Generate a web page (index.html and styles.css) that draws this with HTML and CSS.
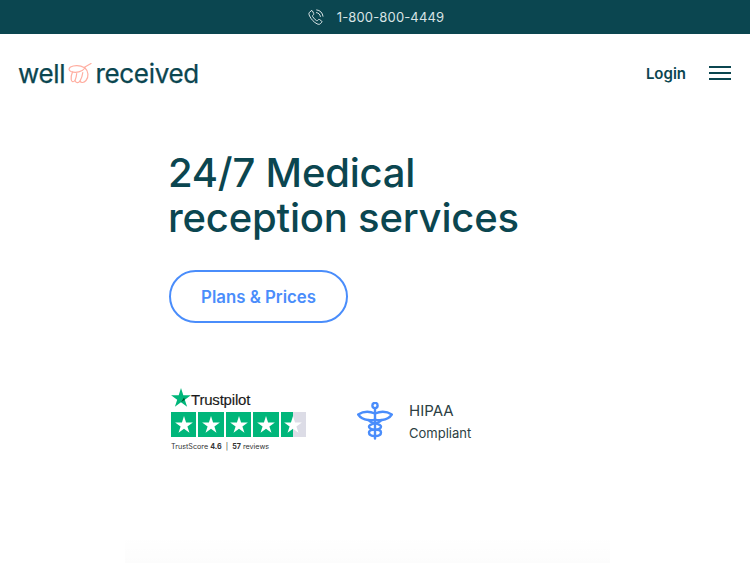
FILE: index.html
```html
<!DOCTYPE html>
<html lang="en">
<head>
    <meta charset="UTF-8">
    <meta name="viewport" content="width=device-width, initial-scale=1.0">
    <title>Well Received</title>
    <link rel="stylesheet" href="styles.css">
</head>
<body>
  <div class="topbar">
    <svg class="phone-icon" width="16" height="16" viewBox="0 0 16 16" fill="none" stroke="#d9e4e5" stroke-width="1" stroke-linecap="round" stroke-linejoin="round">
      <path d="M3.2 1.8 1.4 3.4c-.7.7-.6 2 .2 3.6 1.6 3.3 4.4 6.3 7.4 7.8 1.5.7 2.6.7 3.3 0l1.5-1.6c.3-.3.3-.8-.1-1.1l-2.2-1.600c-.4-.3-.8-.2-1.1.1l-.8.9c-.3.3-.7.3-1.1.1-1.500-.9-3-2.500-3.900-4.100-.2-.4-.2-.8.1-1.100l.9-.8c.3-.3.4-.7.1-1.100L4.400 1.900c-.3-.4-.9-.4-1.200-.1z"/>
      <path d="M8.500 3.600c2 .2 3.600 1.800 3.900 3.900"/>
      <path d="M8.700 .9c3.400.3 5.900 2.900 6.300 6.300"/>
    </svg>
    <span class="phone-number">1-800-800-4449</span>
  </div>

  <div class="header">
    <a class="logo" href="#home">
      <span>well</span>
      <svg class="logo-leaf" width="24" height="21" viewBox="0 0 24 21" fill="none" stroke="#ffaea1" stroke-width="1.200" stroke-linecap="round" stroke-linejoin="round">
        <path d="M23 .6 16 4.500C12 2 6 2 2.500 4 .5 5.500.5 7.500 3 8.500c5 1.800 11 .5 14-3.500"/>
        <path d="M17 5c3.500 3 4 9 1 12.500-2 2.300-5 2.800-6 .5-1.500 2.300-4.500 2-5-.5-1.500 2-3.500 1.500-3.800-1-.2-2.500.2-5 1.300-7.500"/>
        <path d="M12 18c1.500-2.800 2.500-5.500 2.800-8.500M7 17.500c.8-2 1.500-4 1.700-7"/>
      </svg>
      <span>received</span>
    </a>
    <div class="header-right">
      <a class="login" href="#login">Login</a>
      <div class="menu-btn"><span></span><span></span><span></span></div>
    </div>
  </div>

  <div class="hero">
    <h1>24/7 Medical<br>reception services</h1>
    <a class="plans-btn" href="#plans">Plans &amp; Prices</a>

    <div class="badges">
      <div class="trustpilot">
        <div class="tp-brand">
          <svg width="20" height="19" viewBox="0 0 24 23"><path d="M12 0l2.800 8.700H24l-7.400 5.400 2.800 8.700L12 17.400l-7.400 5.400 2.800-8.700L0 8.700h9.200z" fill="#00b67a"/><path d="M15.700 11.500l.9 2.600-4.600 3.300z" fill="#005128"/></svg>
          <span>Trustpilot</span>
        </div>
        <div class="tp-stars">
          <div class="tp-star"><svg viewBox="0 0 24 23"><path d="M12 0l2.800 8.700H24l-7.400 5.400 2.800 8.700L12 17.400l-7.400 5.400 2.800-8.700L0 8.700h9.200z"/></svg></div>
          <div class="tp-star"><svg viewBox="0 0 24 23"><path d="M12 0l2.800 8.700H24l-7.400 5.400 2.800 8.700L12 17.400l-7.400 5.400 2.800-8.700L0 8.700h9.200z"/></svg></div>
          <div class="tp-star"><svg viewBox="0 0 24 23"><path d="M12 0l2.800 8.700H24l-7.400 5.400 2.800 8.700L12 17.400l-7.400 5.400 2.800-8.700L0 8.700h9.200z"/></svg></div>
          <div class="tp-star"><svg viewBox="0 0 24 23"><path d="M12 0l2.800 8.700H24l-7.400 5.400 2.800 8.700L12 17.400l-7.400 5.400 2.800-8.700L0 8.700h9.200z"/></svg></div>
          <div class="tp-star half"><svg viewBox="0 0 24 23"><path d="M12 0l2.800 8.700H24l-7.400 5.400 2.800 8.700L12 17.400l-7.400 5.400 2.800-8.700L0 8.700h9.200z"/></svg></div>
        </div>
        <div class="tp-score">TrustScore <b>4.6</b> &nbsp;|&nbsp; <b>57</b> reviews</div>
      </div>

      <div class="hipaa">
        <svg width="36" height="38" viewBox="0 0 36 38" fill="none" stroke="#4a8dfb" stroke-width="2.400" stroke-linecap="round" stroke-linejoin="round">
          <circle cx="18" cy="3.500" r="2.600"/>
          <path d="M18 6.500v30"/>
          <path d="M1.200 12.500C6 9.500 12 9 18 11.500c6-2.500 12-2 16.800 1-2 3-5.500 5-9.800 5.500-2.500.3-5 .3-7-.5-2 .8-4.500.8-7 .5-4.300-.5-7.800-2.500-9.800-5.500z"/>
          <path d="M12 18c0 3.500 12 3 12 6.500 0 3-6 3-6 3s-6 0-6 3c0 2.500 3 3.500 6 3.500s6-1 6-3.500c0-3-6-3-6-3s-6 0-6-3c0-3.500 12-3 12-6.500"/>
        </svg>
        <div class="hipaa-text">
          <div class="hipaa-title">HIPAA</div>
          <div class="hipaa-sub">Compliant</div>
        </div>
      </div>
    </div>
  </div>

  <div class="next-card"></div>
</body>
</html>
```

FILE: styles.css
```css
body {
    margin: 0;
    height: 563px;
    overflow: hidden;
    font-family: Inter, "Liberation Sans", sans-serif;
    color: #0b4650;
    background-color: white;
}
a {
    text-decoration: none;
}

.topbar {
    height: 34px;
    padding-left: 2px;
    background-color: #0b4650;
    color: #d9e4e5;
    display: flex;
    align-items: center;
    justify-content: center;
    gap: 13px;
    font-size: 13px;
    letter-spacing: 0.15px;
}
.phone-icon {
    display: block;
}

.header {
    display: flex;
    align-items: center;
    justify-content: space-between;
    height: 78px;
    padding: 0 19px 0 18px;
}
.logo {
    display: flex;
    align-items: center;
    gap: 3px;
    color: #0b4650;
    font-size: 26px;
    letter-spacing: -0.3px;
    -webkit-text-stroke: 0.25px #0b4650;
}
.logo-leaf {
    display: block;
    margin-top: 1px;
}
.header-right {
    display: flex;
    align-items: center;
    gap: 23px;
}
.login {
    color: #0b4650;
    font-size: 15px;
    font-weight: 600;
}
.menu-btn {
    width: 22px;
    display: flex;
    flex-direction: column;
    gap: 4px;
}
.menu-btn span {
    display: block;
    height: 2px;
    background-color: #0b4650;
}

.hero {
    padding: 38px 0 0 169px;
}
h1 {
    margin: 0 0 0 -1px;
    font-size: 40px;
    font-weight: 500;
    line-height: 45px;
    letter-spacing: -0.2px;
}
.plans-btn {
    display: flex;
    align-items: center;
    justify-content: center;
    box-sizing: border-box;
    width: 179px;
    height: 53px;
    margin-top: 30px;
    border: 2px solid #4a8dfb;
    border-radius: 27px;
    color: #4a8dfb;
    font-size: 16.8px;
    font-weight: 600;
}

.badges {
    display: flex;
    align-items: center;
    gap: 51px;
    margin-top: 65px;
}
.trustpilot {
    width: 135px;
    padding-left: 2px;
}
.tp-brand {
    display: flex;
    align-items: flex-start;
    height: 20px;
    color: #1a1a1a;
    font-family: "Liberation Sans", sans-serif;
    font-size: 15px;
    line-height: 24px;
    letter-spacing: -0.2px;
    -webkit-text-stroke: 0.15px #1a1a1a;
}
.tp-stars {
    display: flex;
    gap: 2px;
    margin-top: 4px;
}
.tp-star {
    flex: 1;
    height: 25px;
    background-color: #00b67a;
    display: flex;
    align-items: center;
    justify-content: center;
}
.tp-star svg {
    width: 18px;
    height: 17px;
    fill: white;
}
.tp-star.half {
    background: linear-gradient(90deg, #00b67a 50%, #dcdce6 50%);
}
.tp-score {
    margin-top: 4px;
    font-size: 7.2px;
    line-height: 12px;
    color: #333;
    white-space: nowrap;
}

.hipaa {
    display: flex;
    align-items: center;
    gap: 16px;
    padding-top: 1px;
}
.hipaa svg {
    display: block;
}
.hipaa-text {
    color: #2d3f44;
}
.hipaa-title {
    font-size: 15px;
    line-height: 25px;
}
.hipaa-sub {
    font-size: 13px;
    line-height: 21px;
}

.next-card {
    position: absolute;
    bottom: 0;
    left: 125px;
    width: 485px;
    height: 28px;
    background: linear-gradient(rgba(0, 0, 0, 0), rgba(0, 0, 0, 0.012));
}
```
